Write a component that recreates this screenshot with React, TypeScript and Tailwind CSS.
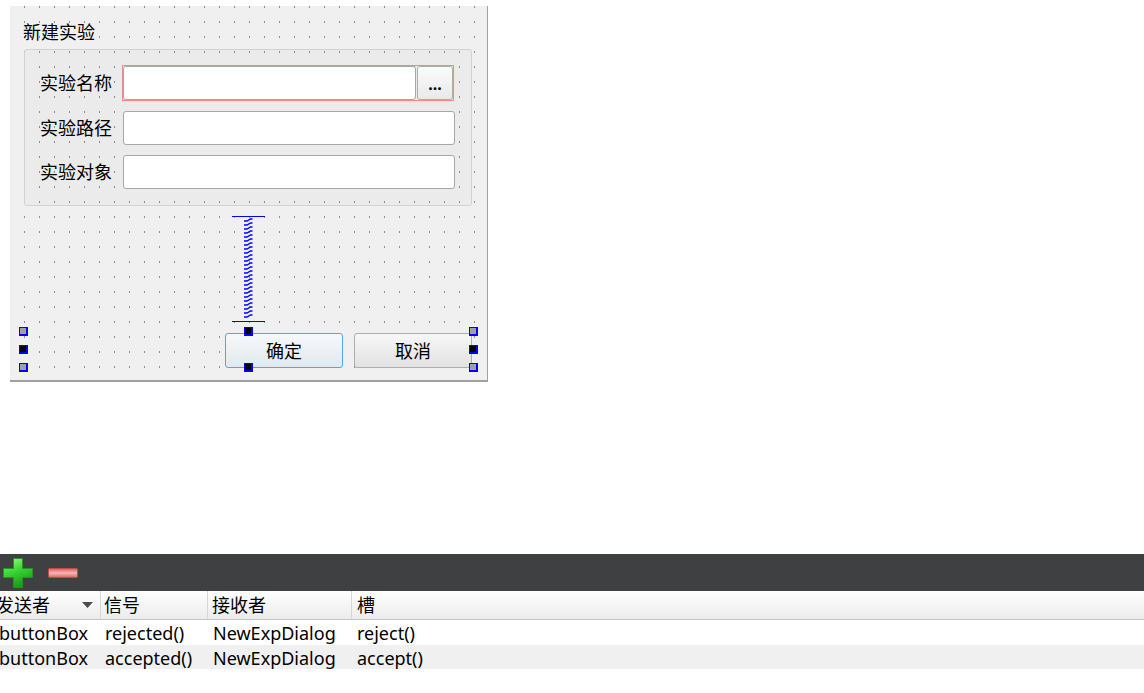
import React from "react";

type Handle = { left: number; top: number; solid?: boolean };

// grab handles drawn around the selected button box
const handles: Handle[] = [
  { left: -4, top: -4 },
  { left: -4, top: 14, solid: true },
  { left: -4, top: 32 },
  { left: 221, top: -4, solid: true },
  { left: 221, top: 32, solid: true },
  { left: 446, top: -4 },
  { left: 446, top: 14, solid: true },
  { left: 446, top: 32 },
];

const connections = [
  { sender: "buttonBox", signal: "rejected()", receiver: "NewExpDialog", slot: "reject()" },
  { sender: "buttonBox", signal: "accepted()", receiver: "NewExpDialog", slot: "accept()" },
];

const VerticalSpacer: React.FC = () => {
  const steps: string[] = [];
  for (let y = 2; y < 102; y += 4) {
    steps.push(`M12 ${y + 3} H15 L18.5 ${y + 1} H20.5`);
  }
  return (
    <svg width="33" height="106" viewBox="0 0 33 106" className="block">
      <path d="M0 0.5 H33 M0 105.5 H33" stroke="#0000ff" strokeWidth="1" />
      <path d={steps.join(" ")} stroke="#0000ff" strokeWidth="1.3" fill="none" />
    </svg>
  );
};

const PlusIcon: React.FC = () => (
  <svg width="30" height="30" viewBox="0 0 30 30">
    <defs>
      <linearGradient id="plusFill" x1="0" y1="0" x2="0.4" y2="1">
        <stop offset="0" stopColor="#a6ff8f" />
        <stop offset="0.45" stopColor="#3fdc3a" />
        <stop offset="1" stopColor="#17a017" />
      </linearGradient>
    </defs>
    <path
      d="M10.5 0.5 H19.5 V10.5 H29.5 V19.5 H19.5 V29.5 H10.5 V19.5 H0.5 V10.5 H10.5 Z"
      fill="url(#plusFill)"
      stroke="#2c8f2c"
      strokeWidth="1"
    />
  </svg>
);

const MinusIcon: React.FC = () => (
  <svg width="30" height="10" viewBox="0 0 30 10">
    <defs>
      <linearGradient id="minusFill" x1="0" y1="0" x2="0" y2="1">
        <stop offset="0" stopColor="#d95a5a" />
        <stop offset="0.5" stopColor="#f7b9b9" />
        <stop offset="1" stopColor="#d86464" />
      </linearGradient>
    </defs>
    <rect x="0.5" y="0.5" width="29" height="9" rx="1" fill="url(#minusFill)" stroke="#c84848" strokeWidth="1" />
  </svg>
);

const SortArrow: React.FC = () => (
  <svg width="11" height="6" viewBox="0 0 11 6">
    <polygon points="0,0 11,0 5.5,6" fill="#4d4d4d" />
  </svg>
);

const FormRow: React.FC<{ label: string; children: React.ReactNode; className?: string }> = ({ label, children, className }) => (
  <div className={`flex items-center h-[34px] ${className ?? ""}`}>
    <div className="w-[83px] shrink-0">{label}</div>
    {children}
  </div>
);

export default function App() {
  return (
    <div className="h-[693px] w-[1144px] flex flex-col bg-white text-black text-[18px] font-['Noto_Sans','Noto_Sans_CJK_SC',sans-serif] overflow-hidden">
      {/* dialog form on the designer canvas */}
      <div className="relative ml-[10px] mt-[6px] w-[478px] h-[376px] shrink-0 bg-[#f0f0f0] bg-[conic-gradient(at_1px_2px,transparent_270deg,#8e8e8e_0)] bg-size-[15px_15px] bg-position-[14px_0px] border-r border-b-2 border-[#a0a0a0] pt-[13px]">
        <div className="pl-[13px] leading-[27px]">新建实验</div>

        <div className="ml-[14px] mt-[3px] w-[448px] h-[157px] rounded-[3px] border border-[#d2d2d2] bg-black/[0.02] pt-[16px] pl-[15px]">
          <FormRow label="实验名称">
            <div className="flex gap-px outline outline-1 outline-[#f08a8a]">
              <div className="w-[293px] h-[34px] rounded-[3px] border border-[#a8a8a8] bg-white" />
              <button className="w-[36px] h-[34px] rounded-[3px] border border-[#adadad] bg-linear-to-b from-[#fbfbfb] to-[#e9e9e9] text-[16px] font-bold leading-none flex items-center justify-center pt-[2px]">
                ...
              </button>
            </div>
          </FormRow>
          <FormRow label="实验路径" className="mt-[11px]">
            <div className="w-[332px] h-[34px] rounded-[3px] border border-[#a8a8a8] bg-white" />
          </FormRow>
          <FormRow label="实验对象" className="mt-[10px]">
            <div className="w-[332px] h-[34px] rounded-[3px] border border-[#a8a8a8] bg-white" />
          </FormRow>
        </div>

        <div className="ml-[222px] mt-[10px]">
          <VerticalSpacer />
        </div>

        {/* selected button box */}
        <div className="relative ml-[13px] mt-[9px] w-[450px] h-[37px] flex justify-end items-start gap-[11px] pt-[2px] pr-[1px]">
          <button className="w-[118px] h-[35px] rounded-[3px] border border-[#4fa6f0] bg-linear-to-b from-[#f7f9fb] to-[#e1e8ef] leading-none">
            确定
          </button>
          <button className="w-[118px] h-[35px] rounded-[3px] border border-[#adadad] bg-linear-to-b from-[#f7f7f7] to-[#e2e2e2] leading-none">
            取消
          </button>
          {handles.map((h, i) => (
            <div
              key={i}
              className={`absolute w-[9px] h-[9px] border-t border-l border-r-2 border-b-2 border-[#0000ff] ${h.solid ? "bg-black" : "bg-[#a0a0a0]"}`}
              style={{ left: h.left, top: h.top }}
            />
          ))}
        </div>
      </div>

      {/* signal / slot editor */}
      <div className="mt-auto h-[139px] shrink-0 flex flex-col">
        <div className="h-[37px] bg-[#3f4042] flex items-center pl-[3px]">
          <PlusIcon />
          <div className="ml-[15px]">
            <MinusIcon />
          </div>
        </div>

        <div className="h-[29px] grid grid-cols-[100px_107px_144px_1fr] bg-linear-to-b from-white to-[#ececec] border-b border-[#c4c4c4]">
          <div className="flex items-center justify-between pr-[7px]">
            <span className="-ml-[4px]">发送者</span>
            <SortArrow />
          </div>
          <div className="flex items-center border-l border-[#d6d6d6] pl-[3px]">信号</div>
          <div className="flex items-center border-l border-[#d6d6d6] pl-[4px]">接收者</div>
          <div className="flex items-center border-l border-[#d6d6d6] pl-[5px]">槽</div>
        </div>

        {connections.map((c, i) => (
          <div
            key={i}
            className={`grid grid-cols-[100px_107px_144px_1fr] items-center ${i % 2 === 1 ? "h-[24px] bg-[#f0f0f0]" : "h-[25px] bg-white"}`}
          >
            <span className="-ml-[1px]">{c.sender}</span>
            <span className="pl-[5px]">{c.signal}</span>
            <span className="pl-[6px]">{c.receiver}</span>
            <span className="pl-[6px]">{c.slot}</span>
          </div>
        ))}
      </div>
    </div>
  );
}
